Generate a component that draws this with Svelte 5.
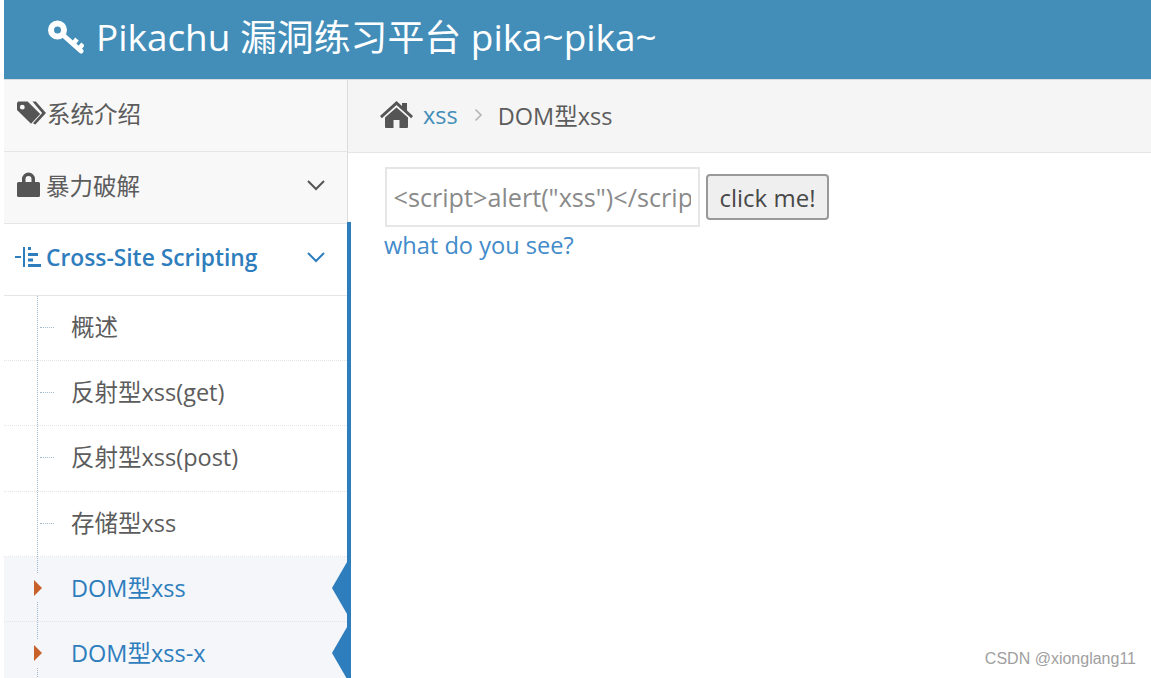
<script>
const subItems = [
    { label: '概述' },
    { label: '反射型xss(get)' },
    { label: '反射型xss(post)' },
    { label: '存储型xss' },
    { label: 'DOM型xss', active: true },
    { label: 'DOM型xss-x', active: true },
]
</script>

<div class="page">
    <header class="navbar">
        <svg class="key" viewBox="0 0 36 36" aria-hidden="true">
            <g fill="none" stroke="#fff">
                <circle cx="9.500" cy="12" r="6.500" stroke-width="6" />
                <path d="M15 17 33 33" stroke-width="5" stroke-linecap="round" />
                <path d="M25 26 29 21M31 31 35 26" stroke-width="4.500" />
            </g>
        </svg>
        <span class="brand">Pikachu 漏洞练习平台 pika~pika~</span>
    </header>
    <div class="main">
        <aside class="sidebar">
            <div class="nav-item">
                <svg class="tag" viewBox="1 1 30 24" aria-hidden="true">
                    <path d="M1 2.500 2.500 1H12l13 13-9.500 10L1 10zM6.500 4.500a2.500 2.500 0 1 0 0 5 2.500 2.500 0 0 0 0-5z" fill="#555" fill-rule="evenodd" />
                    <path d="M17 1h3.500L31 13 20 25l-2.500-1.500L27 13z" fill="#555" />
                </svg>
                <span>系统介绍</span>
            </div>
            <div class="nav-item">
                <svg class="lock" viewBox="0 0 23 25" aria-hidden="true">
                    <path d="M5 10V7a6.500 6.500 0 0 1 13 0v3h3.500a1.500 1.500 0 0 1 1.500 1.500v12a1.500 1.500 0 0 1-1.500 1.500h-20A1.500 1.500 0 0 1 0 23.500v-12A1.500 1.500 0 0 1 1.500 10zm3.500 0h6V7a3 3 0 0 0-6 0z" fill="#555" fill-rule="evenodd" />
                </svg>
                <span>暴力破解</span>
                <svg class="chev" viewBox="0 0 20 12" aria-hidden="true"><path d="M2 2l8 8 8-8" fill="none" stroke="#555" stroke-width="2" /></svg>
            </div>
            <div class="group">
                <div class="nav-item open">
                    <svg class="xss" viewBox="0 0 27 22" aria-hidden="true">
                        <path d="M0 10h6v2H0zM8 1h2v20H8zM13 1h3v3h-3zM13 7h10v3H13zM13 12.500h5v3h-5zM13 18h13v3H13z" fill="#2e7dbd" />
                    </svg>
                    <span>Cross-Site Scripting</span>
                    <svg class="chev" viewBox="0 0 20 12" aria-hidden="true"><path d="M2 2l8 8 8-8" fill="none" stroke="#2e7dbd" stroke-width="2" /></svg>
                </div>
                <ul class="submenu">
                    {#each subItems as item}
                        <li class:active={item.active}>
                            {#if item.active}<i class="marker"></i>{/if}
                            {item.label}
                        </li>
                    {/each}
                </ul>
            </div>
        </aside>
        <section class="content">
            <div class="breadcrumbs">
                <svg class="home" viewBox="0 0 33 27" aria-hidden="true">
                    <path d="M16.500 0 22 5V2h5v7.500l6 5.500-1.800 2.200L16.500 4 1.800 17.200 0 15z" fill="#555" />
                    <path d="M16.500 6.500 28 16.500V26a1 1 0 0 1-1 1h-7.500v-8h-6v8H6a1 1 0 0 1-1-1v-9.500z" fill="#555" />
                </svg>
                <a class="crumb" href="#xss">xss</a>
                <svg class="sep" viewBox="0 0 9 14" aria-hidden="true"><path d="M1.500 1.500 7 7l-5.500 5.500" fill="none" stroke="#b5b5b5" stroke-width="1.600" /></svg>
                <span>DOM型xss</span>
            </div>
            <div class="body">
                <form class="xss-form" onsubmit={(e) => e.preventDefault()}>
                    <input type="text" value={'<script>alert("xss")</' + 'script>'} />
                    <button type="submit">click me!</button>
                </form>
                <a class="see" href="#see">what do you see?</a>
            </div>
        </section>
    </div>
    <div class="watermark">CSDN @xionglang11</div>
</div>

<style>
:global(body) {
    margin: 0;
    background: #fff;
}
.page {
    position: relative;
    height: 678px;
    overflow: hidden;
    padding-left: 4px;
    box-sizing: border-box;
    font-family: "Open Sans", "Noto Sans CJK SC", sans-serif;
    font-size: 23.5px;
    color: #5c5c5c;
}
.navbar {
    height: 79px;
    background: #438eb9;
    display: flex;
    align-items: center;
    padding-left: 44px;
    gap: 12px;
    color: #fff;
    border-bottom: 1px solid #d8dde0;
}
.key {
    width: 36px;
    height: 36px;
    margin-bottom: 7px;
}
.brand {
    font-size: 36.9px;
    white-space: nowrap;
    margin-bottom: 10px;
}
.main {
    display: flex;
    height: 598px;
}
.sidebar {
    width: 343px;
    flex: none;
    background: #f8f8f8;
    border-right: 1px solid #dcdcdc;
}
.nav-item {
    height: 72px;
    box-sizing: border-box;
    border-bottom: 1px solid #e5e5e5;
    display: flex;
    align-items: center;
    padding: 0 21px 5px 13px;
}
.nav-item span {
    white-space: nowrap;
}
.tag {
    width: 29px;
    height: 24px;
    margin-right: 1px;
}
.lock {
    width: 23px;
    height: 25px;
    margin-right: 6px;
    margin-bottom: 2px;
}
.xss {
    width: 27px;
    height: 22px;
    margin-left: -2px;
    margin-right: 4px;
}
.chev {
    width: 20px;
    height: 12px;
    margin-left: auto;
}
.group {
    position: relative;
    background: #fff;
}
.group::after {
    content: "";
    position: absolute;
    top: -2px;
    bottom: 0;
    right: -4px;
    width: 4px;
    background: #2e7dbd;
}
.open {
    color: #2e7dbd;
    font-weight: 600;
    font-size: 22.8px;
}
.submenu {
    position: relative;
    list-style: none;
    margin: 0;
    padding: 0;
}
.submenu::before {
    content: "";
    position: absolute;
    z-index: 1;
    left: 33px;
    top: 0;
    bottom: 0;
    border-left: 1px dotted #9db8cf;
}
.submenu li {
    position: relative;
    height: 65.2px;
    box-sizing: border-box;
    line-height: 63px;
    padding-left: 67px;
    border-bottom: 1px dotted #e4e4e4;
    white-space: nowrap;
}
.submenu li:not(.active)::before {
    content: "";
    position: absolute;
    left: 36px;
    top: 31px;
    width: 14px;
    border-top: 1px dotted #9db8cf;
}
.submenu li.active {
    background: #f4f6fa;
    color: #2e7dbd;
}
.marker {
    position: absolute;
    z-index: 2;
    left: 28px;
    top: 17px;
    width: 12px;
    height: 28px;
    background: #f4f6fa;
}
.marker::after {
    content: "";
    position: absolute;
    left: 2px;
    top: 6px;
    width: 0;
    height: 0;
    border-top: 8px solid transparent;
    border-bottom: 8px solid transparent;
    border-left: 8px solid #c8602a;
}
.submenu li.active::after {
    content: "";
    position: absolute;
    right: 0;
    top: 5px;
    width: 0;
    height: 0;
    border-top: 26px solid transparent;
    border-bottom: 26px solid transparent;
    border-right: 15px solid #2e7dbd;
}
.content {
    flex: 1;
    min-width: 0;
}
.breadcrumbs {
    height: 70px;
    background: #f5f5f5;
    border-bottom: 1px solid #e5e5e5;
    display: flex;
    align-items: center;
    padding: 0 0 2px 32px;
}
.home {
    width: 33px;
    height: 27px;
    margin-top: -1px;
}
.crumb {
    margin-left: 10px;
    color: #438eb9;
    text-decoration: none;
}
.sep {
    width: 9px;
    height: 14px;
    margin: 0 15px 0 16px;
}
.body {
    padding: 14px 0 0 37px;
}
.xss-form {
    display: flex;
    align-items: center;
    gap: 6px;
}
input {
    width: 315px;
    height: 60px;
    box-sizing: border-box;
    border: 2px solid #e6e6e6;
    padding: 0 7px 0 6.500px;
    font: inherit;
    font-size: 25.2px;
    color: #8a8a8a;
    background: #fff;
    outline: none;
}
button {
    width: 123px;
    height: 46px;
    box-sizing: border-box;
    border: 2px solid #999;
    border-radius: 4px;
    background: #efefef;
    font: inherit;
    font-size: 24px;
    color: #484848;
    padding: 0;
}
.see {
    display: block;
    margin: 1px 0 0 -1px;
    color: #428bca;
    text-decoration: none;
    line-height: 34px;
    font-size: 23.6px;
}
.watermark {
    position: absolute;
    right: 15px;
    bottom: 10px;
    font-family: "Liberation Sans", sans-serif;
    font-size: 16px;
    color: #a0a0a0;
    white-space: nowrap;
}
</style>
